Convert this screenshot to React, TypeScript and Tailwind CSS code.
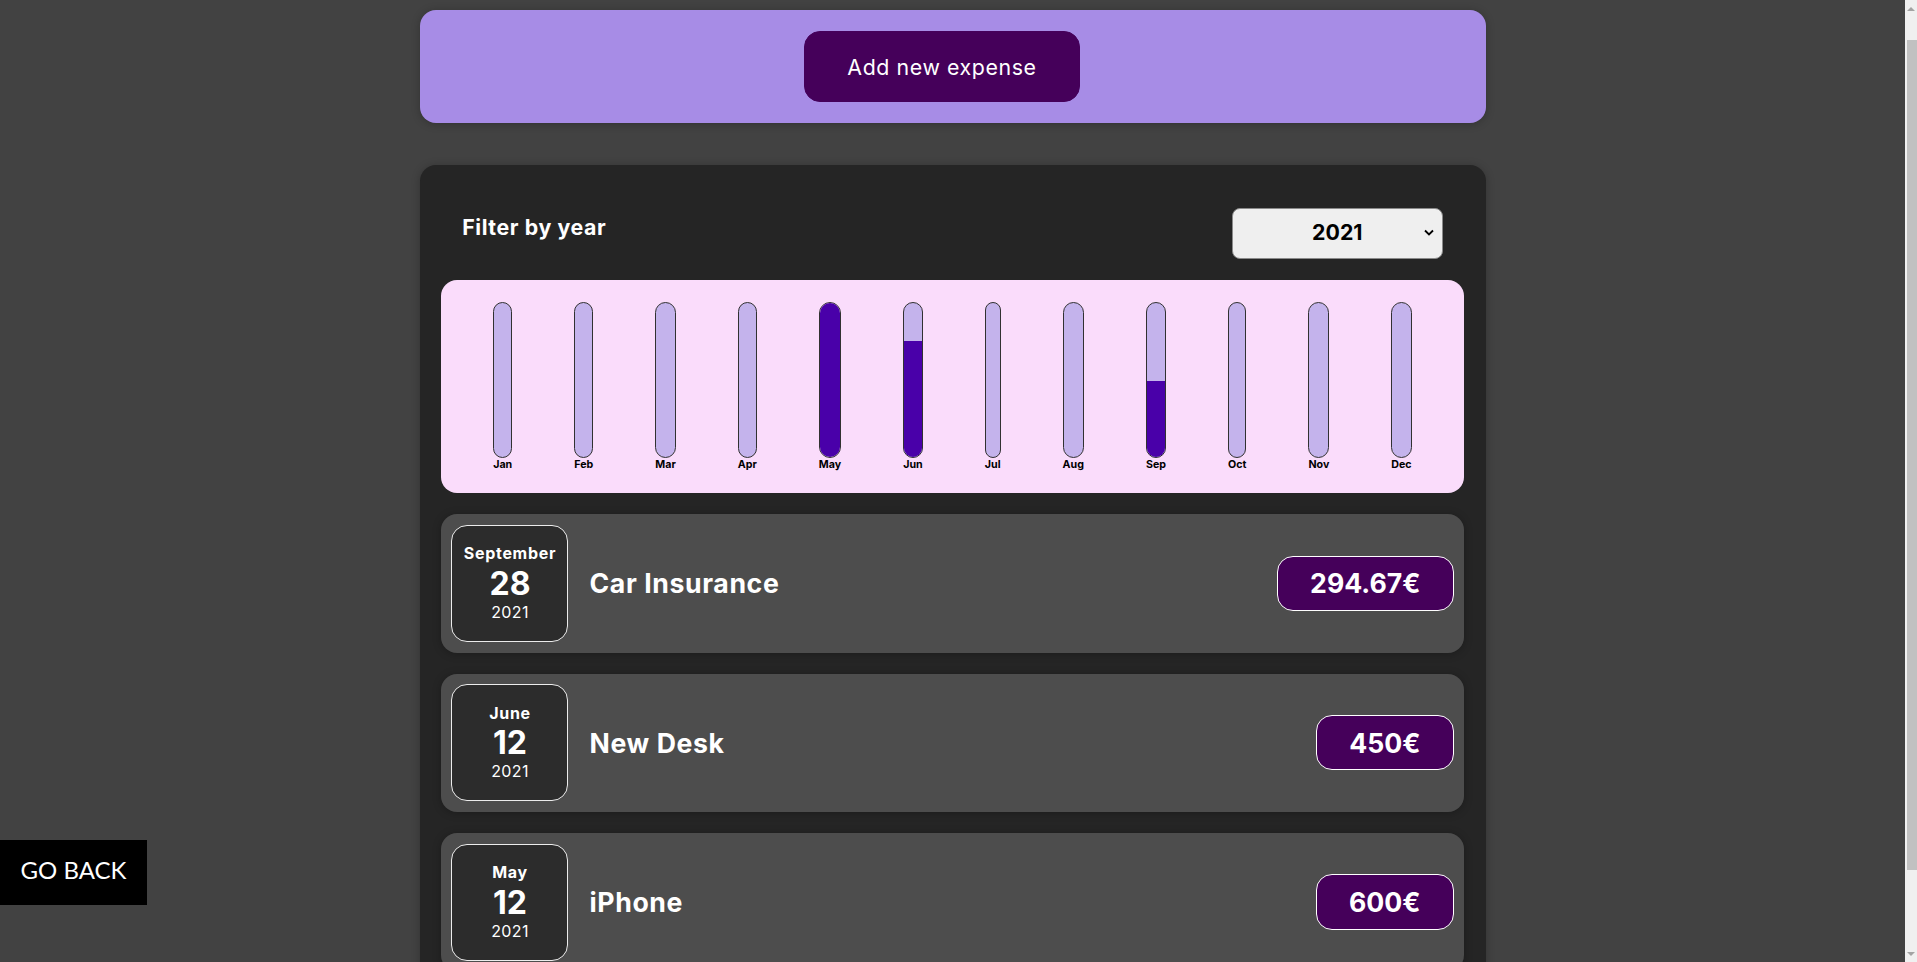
import { useState } from 'react';

type Expense = {
	id: string;
	title: string;
	amount: number;
	date: Date;
};

const EXPENSES: Expense[] = [
	{ id: 'e1', title: 'Car Insurance', amount: 294.67, date: new Date(2021, 8, 28) },
	{ id: 'e2', title: 'New Desk', amount: 450, date: new Date(2021, 5, 12) },
	{ id: 'e3', title: 'iPhone', amount: 600, date: new Date(2021, 4, 12) },
];

const MONTHS = ['Jan', 'Feb', 'Mar', 'Apr', 'May', 'Jun', 'Jul', 'Aug', 'Sep', 'Oct', 'Nov', 'Dec'];

function ChartBar({ label, value, max }: { label: string; value: number; max: number }) {
	const fill = max > 0 ? Math.round((value / max) * 100) + '%' : '0%';
	return (
		<div className="flex h-full flex-col items-center">
			<div className="flex min-h-0 w-full flex-1 flex-col justify-end overflow-hidden rounded-2xl border border-[#313131] bg-[#c4b3ec]">
				<div className="w-full bg-[#4900a9]" style={{ height: fill }} />
			</div>
			<div className="text-center text-[10.67px] font-bold leading-[14px] text-black">{label}</div>
		</div>
	);
}

function ExpenseDate({ date }: { date: Date }) {
	const month = date.toLocaleString('en-US', { month: 'long' });
	const day = date.toLocaleString('en-US', { day: '2-digit' });
	const year = date.getFullYear();
	return (
		<div className="flex h-[117px] w-[117px] shrink-0 flex-col items-center justify-center rounded-2xl border border-[#ececec] bg-[#2c2c2c] text-white">
			<div className="text-[16px] font-bold leading-[19.5px] tracking-[0.7px]">{month}</div>
			<div className="text-[32px] font-bold leading-[39px]">{day}</div>
			<div className="text-[16px] leading-[19.5px] tracking-[0.4px]">{year}</div>
		</div>
	);
}

function ExpenseItem({ expense }: { expense: Expense }) {
	return (
		<li className="my-[21px] flex items-center rounded-2xl bg-[#4d4d4d] p-[10.67px] shadow-[0_1px_8px_rgba(0,0,0,0.25)]">
			<ExpenseDate date={expense.date} />
			<div className="flex flex-1 items-center">
				<h2 className="mx-[21px] flex-1 text-[26.67px] font-bold tracking-[0.6px] text-white">{expense.title}</h2>
				<div className="rounded-2xl border border-white bg-[#45005a] px-[32px] py-[10.67px] text-[26.67px] font-bold leading-[32px] text-white">
					{expense.amount}€
				</div>
			</div>
		</li>
	);
}

export default function App() {
	const [year, setYear] = useState<string>('2021');
	const filtered = EXPENSES.filter((e) => e.date.getFullYear().toString() === year);
	const totals = MONTHS.map((_, i) =>
		filtered.filter((e) => e.date.getMonth() === i).reduce((s, e) => s + e.amount, 0),
	);
	const max = Math.max(...totals);

	return (
		<div className="flex h-[962px] overflow-hidden bg-[#424242] font-['Inter',sans-serif]">
			<div className="min-w-0 flex-1 overflow-hidden">
				<div className="mx-auto mt-[10px] w-[1066px] rounded-2xl bg-[#a78ce6] p-[21.33px] text-center shadow-[0_1px_8px_rgba(0,0,0,0.25)]">
					<button className="mr-[21px] rounded-2xl border border-[#45005a] bg-[#45005a] px-[42.67px] py-[21.33px] text-[21.33px] leading-[26px] tracking-[0.6px] text-white">
						Add new expense
					</button>
				</div>

				<div className="mx-auto mt-[42px] w-[1066px] rounded-2xl bg-[#252525] p-[21.33px] shadow-[0_1px_8px_rgba(0,0,0,0.25)]">
					<div className="px-[21.33px] text-white">
						<div className="my-[21.33px] flex w-full items-center justify-between">
							<label className="mb-[10.67px] text-[21.33px] font-bold tracking-[0.6px]">Filter by year</label>
							<div className="relative">
								<select
									value={year}
									onChange={(e) => setYear(e.target.value)}
									className="h-[51px] w-[211px] appearance-none rounded-lg border border-[#8a8a8a] bg-[#efefef] px-[64px] text-center text-[21.33px] font-bold text-black"
								>
									<option value="2022">2022</option>
									<option value="2021">2021</option>
									<option value="2020">2020</option>
									<option value="2019">2019</option>
								</select>
								<svg
									className="pointer-events-none absolute right-[9px] top-[21px]"
									width="10"
									height="7"
									viewBox="0 0 10 7"
									fill="none"
									stroke="#000"
									strokeWidth="1.8"
								>
									<path d="M1 1.5l4 4 4-4" />
								</svg>
							</div>
						</div>
					</div>

					<div className="flex h-[213px] justify-around rounded-2xl bg-[#fadcfb] p-[21.33px] text-center">
						{MONTHS.map((m, i) => (
							<ChartBar key={m} label={m} value={totals[i]} max={max} />
						))}
					</div>

					<ul>
						{filtered.map((e) => (
							<ExpenseItem key={e.id} expense={e} />
						))}
					</ul>
				</div>
			</div>

			<div className="flex w-[12px] shrink-0 flex-col bg-[#f0f0f0]">
				<div className="flex h-[17px] items-center justify-center">
					<div className="h-0 w-0 border-x-[4px] border-b-[4px] border-x-transparent border-b-[#a3a3a3]" />
				</div>
				<div className="mt-[23px] ml-[2px] h-[830px] bg-[#c1c1c1]" />
				<div className="flex flex-1 items-end justify-center pb-[6px]">
					<div className="h-0 w-0 border-x-[4px] border-t-[4px] border-x-transparent border-t-[#a3a3a3]" />
				</div>
			</div>

			<button className="fixed left-0 top-[840px] flex h-[65px] w-[147px] items-center justify-center bg-black pb-[5px] font-['Lato',sans-serif] text-[24px] text-white">
				GO BACK
			</button>
		</div>
	);
}
